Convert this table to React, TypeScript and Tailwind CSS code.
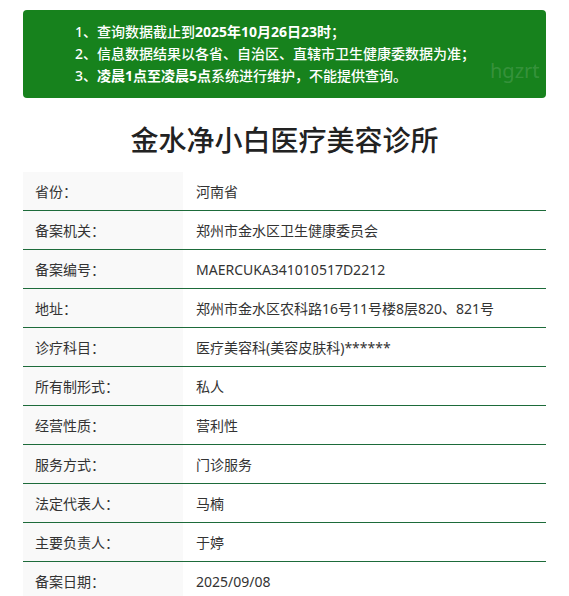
const rows: [string, string][] = [
  ['省份：', '河南省'],
  ['备案机关：', '郑州市金水区卫生健康委员会'],
  ['备案编号：', 'MAERCUKA341010517D2212'],
  ['地址：', '郑州市金水区农科路16号11号楼8层820、821号'],
  ['诊疗科目：', '医疗美容科(美容皮肤科)******'],
  ['所有制形式：', '私人'],
  ['经营性质：', '营利性'],
  ['服务方式：', '门诊服务'],
  ['法定代表人：', '马楠'],
  ['主要负责人：', '于婷'],
  ['备案日期：', '2025/09/08'],
];

export default function App() {
  return (
    <div
      className="min-h-[596px] bg-white px-[23px] pt-[10px] text-[#333]"
      style={{ fontFamily: '"Noto Sans", "Noto Sans CJK SC", sans-serif' }}
    >
      {/* Notice */}
      <div className="relative h-[88px] overflow-hidden rounded-[4px] bg-[#17821d] pl-[52px] pt-[11px] text-[14px] leading-[22px] font-medium text-white">
        <p>
          1、查询数据截止到<span className="font-bold">2025年10月26日23时</span>；
        </p>
        <p>2、信息数据结果以各省、自治区、直辖市卫生健康委数据为准；</p>
        <p>
          3、<span className="font-bold">凌晨1点至凌晨5点</span>系统进行维护，不能提供查询。
        </p>
        <span className="pointer-events-none absolute left-[467px] top-[50px] text-[20px] font-normal text-white/15">
          hgzrt
        </span>
      </div>

      {/* Title */}
      <h1 className="flex h-[74px] items-center justify-center pt-[9px] text-[28px] font-medium text-[#222]">
        金水净小白医疗美容诊所
      </h1>

      {/* Records */}
      <div className="text-[14px]">
        {rows.map(([label, value]) => (
          <div key={label} className="flex h-[39px] border-b border-[#1d6b3a]">
            <div className="flex w-[160px] items-center bg-[#f9f9f9] pl-[12px]">{label}</div>
            <div className="flex items-center pl-[13px]">{value}</div>
          </div>
        ))}
      </div>
    </div>
  );
}
